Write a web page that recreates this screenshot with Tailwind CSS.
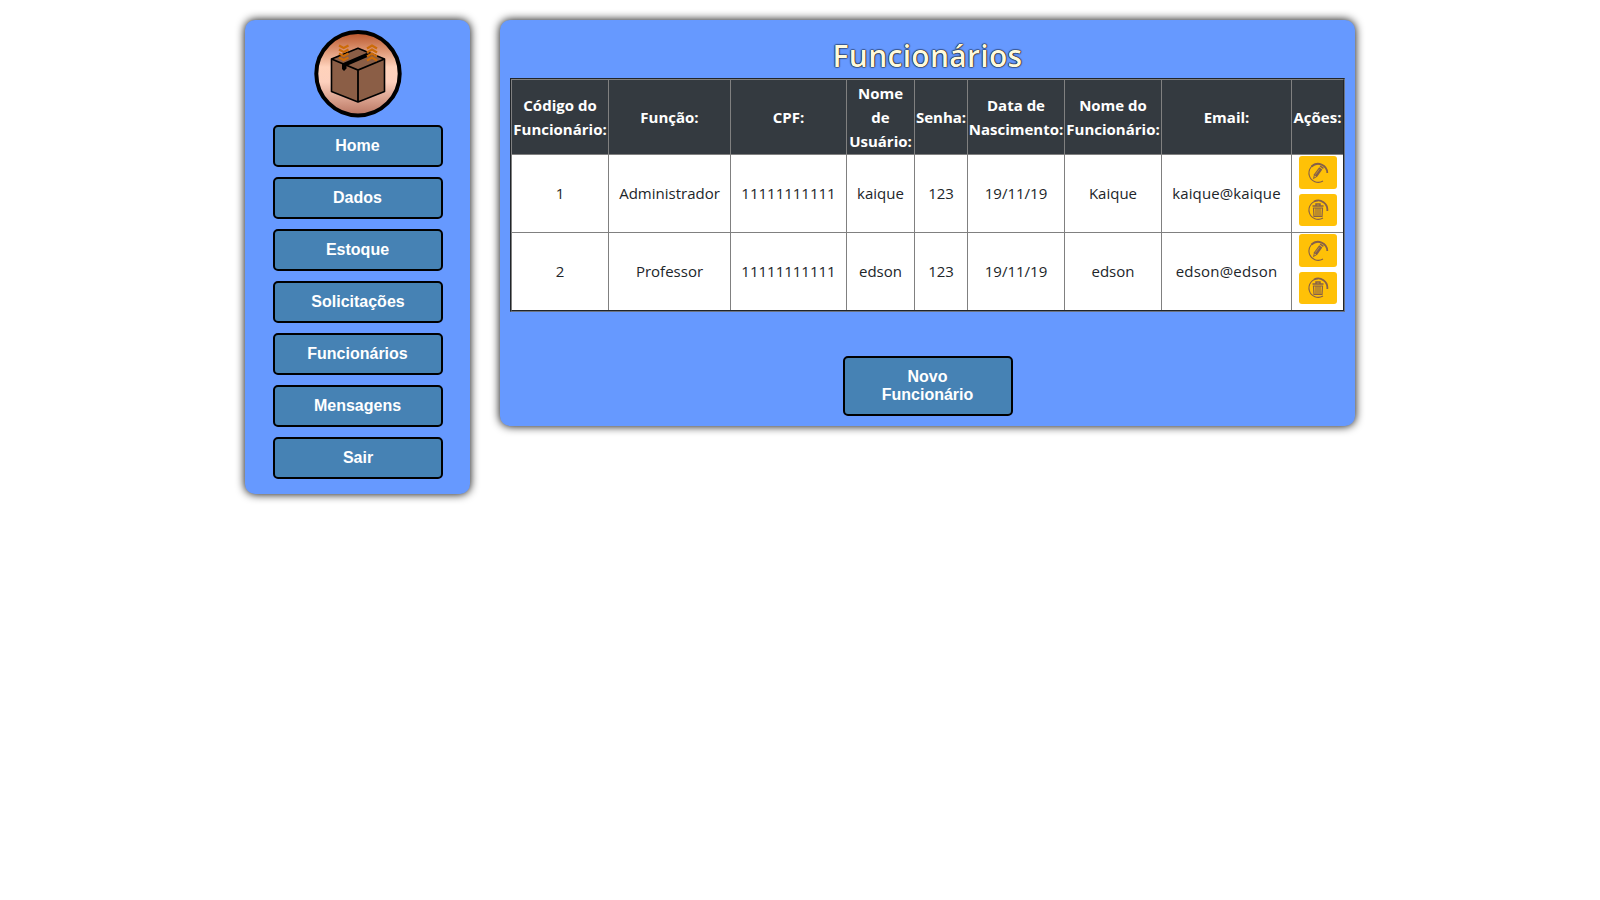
<!DOCTYPE html>
<html lang="pt-BR">
<head>
<meta charset="utf-8">
<title>Funcionários</title>
<script src="https://cdn.jsdelivr.net/npm/@tailwindcss/browser@4"></script>
</head>
<body class="bg-white text-[#212529] font-['Open_Sans',sans-serif]">
<svg class="hidden">
  <symbol id="pencil" viewBox="0 0 22 22">
    <path d="M11 1.7A9.3 9.3 0 1 0 16 19" fill="none" stroke="#85604a" stroke-width="1.1"/>
    <path d="M4.500 4.500A9.3 9.3 0 0 1 20.3 11" fill="none" stroke="#85604a" stroke-width="1.8"/>
    <path d="M6 17.300L7 12.3L12.2 5.3L15.3 7.5L10.2 14.7Z" fill="#85604a"/>
    <path d="M12.6 4.6L13.5 3.4L16.9 5.7L16 7Z" fill="#85604a"/>
    <path d="M8.400 12.600L12.4 7.200" stroke="#ffc107" stroke-width=".5"/>
    <path d="M7.3 15.4L7.7 13.600L9.200 14.6Z" fill="#ffc107"/>
  </symbol>
  <symbol id="trash" viewBox="0 0 22 22">
    <path d="M11 1.7A9.3 9.3 0 1 0 16 19" fill="none" stroke="#85604a" stroke-width="1.1"/>
    <path d="M7 2.500A9.3 9.3 0 0 1 20.3 12" fill="none" stroke="#85604a" stroke-width="1.8"/>
    <path d="M5.500 7.100H16.500M9 6.7V5H13V6.7" fill="none" stroke="#85604a" stroke-width="1.5"/>
    <path d="M6.500 9H15.500L15 17.500H7Z" fill="none" stroke="#85604a" stroke-width="1.2"/>
    <path d="M9 9V17M11 9V17M13 9V17" stroke="#85604a" stroke-width="1.100"/>
  </symbol>
</svg>
<main class="flex min-h-screen items-start pt-5 pl-[245px]">
  <nav class="flex w-[225px] h-[474px] flex-col items-center gap-[10px] rounded-[10px] bg-[#6699ff] pt-[10px] shadow-[0_0_10px_black]">
    <svg class="-mb-[3px] ml-[1px] h-[88px] w-[88px] shrink-0" viewBox="0 0 88 88">
      <defs><linearGradient id="g" x1="0" y1="0" x2="0" y2="1">
        <stop offset="0" stop-color="#b9532a"/><stop offset=".12" stop-color="#cc7750"/><stop offset=".42" stop-color="#ffd2bb"/><stop offset=".6" stop-color="#fdd0bd"/><stop offset="1" stop-color="#b87460"/>
      </linearGradient></defs>
      <circle cx="44" cy="43.700" r="41.700" fill="url(#g)" stroke="#000" stroke-width="4"/>
      <path d="M17.5 29L44 18.300L70.500 29V61.500L44 72L17.500 61.500Z" fill="#8b5e46" stroke="#000" stroke-width="1.6" stroke-linejoin="round"/>
      <path d="M17.500 29L44 40L70.500 29M44 40V72" fill="none" stroke="#000" stroke-width="1.800"/>
      <path d="M28 33.500L52.500 23L57 25.500L32.500 36V38.500L30 41L28 39Z" fill="#000"/>
      <g fill="none" stroke="#cc6b08" stroke-width="2.200">
        <path d="M25 15.500L29.700 18L34.500 15.500M25 19.500L29.700 22L34.500 19.500M25 23.500L29.700 26L34.500 23.500M25 27.500L29.700 30L34.500 27.500"/>
        <path d="M53 18.500L58 15.500L63 18.500M53 22.500L58 19.500L63 22.500M53 26.500L58 23.500L63 26.500M53 30.500L58 27.500L63 30.500"/>
      </g>
    </svg>
    <a class="flex h-[42px] w-[170px] shrink-0 items-center justify-center rounded-[5px] border-2 border-black bg-[#4682b4] font-['Liberation_Sans',sans-serif] text-base font-bold text-white">Home</a>
    <a class="flex h-[42px] w-[170px] shrink-0 items-center justify-center rounded-[5px] border-2 border-black bg-[#4682b4] font-['Liberation_Sans',sans-serif] text-base font-bold text-white">Dados</a>
    <a class="flex h-[42px] w-[170px] shrink-0 items-center justify-center rounded-[5px] border-2 border-black bg-[#4682b4] font-['Liberation_Sans',sans-serif] text-base font-bold text-white">Estoque</a>
    <a class="flex h-[42px] w-[170px] shrink-0 items-center justify-center rounded-[5px] border-2 border-black bg-[#4682b4] pl-px font-['Liberation_Sans',sans-serif] text-base font-bold text-white">Solicitações</a>
    <a class="flex h-[42px] w-[170px] shrink-0 items-center justify-center rounded-[5px] border-2 border-black bg-[#4682b4] font-['Liberation_Sans',sans-serif] text-base font-bold text-white">Funcionários</a>
    <a class="flex h-[42px] w-[170px] shrink-0 items-center justify-center rounded-[5px] border-2 border-black bg-[#4682b4] font-['Liberation_Sans',sans-serif] text-base font-bold text-white">Mensagens</a>
    <a class="flex h-[42px] w-[170px] shrink-0 items-center justify-center rounded-[5px] border-2 border-black bg-[#4682b4] pl-px font-['Liberation_Sans',sans-serif] text-base font-bold text-white">Sair</a>
  </nav>
  <section class="ml-[30px] flex h-[406px] w-[855px] flex-col items-center rounded-[10px] bg-[#6699ff] pt-[17px] shadow-[0_0_10px_black]">
    <h1 class="h-[41px] text-[30px] leading-[38px] font-semibold tracking-[0.3px] text-[#fffadc] [text-shadow:0_0_1px_black,0_0_2px_black,0_0_1px_black]">Funcionários</h1>
    <div class="w-[835px] border border-t-[#212529] border-r-gray-500 border-b-gray-500 border-l-[#212529]">
      <div class="grid grid-cols-[96px_121px_115px_67px_52px_96px_96px_129px_51px] grid-rows-[74px_77px_77px] gap-px border border-t-[#808080] border-r-[#212529] border-b-[#212529] border-l-[#808080] bg-[#808080] text-center text-[15px] leading-6 *:flex *:items-center *:justify-center *:bg-white">
        <div class="bg-[#343a40]! font-bold text-white">Código do<br>Funcionário:</div>
        <div class="bg-[#343a40]! font-bold text-white">Função:</div>
        <div class="bg-[#343a40]! font-bold text-white">CPF:</div>
        <div class="bg-[#343a40]! font-bold text-white">Nome<br>de<br>Usuário:</div>
        <div class="bg-[#343a40]! font-bold text-white">Senha:</div>
        <div class="bg-[#343a40]! font-bold text-white">Data de<br>Nascimento:</div>
        <div class="bg-[#343a40]! font-bold text-white">Nome do<br>Funcionário:</div>
        <div class="bg-[#343a40]! font-bold text-white">Email:</div>
        <div class="bg-[#343a40]! font-bold text-white">Ações:</div>
        <div class="pb-0.5">1</div><div class="pb-0.5">Administrador</div><div class="pb-0.5">11111111111</div><div class="pb-0.5">kaique</div><div class="pb-0.5">123</div><div class="pb-0.5">19/11/19</div><div class="pb-0.5">Kaique</div><div class="pb-0.5 tracking-[0.1px]">kaique@kaique</div>
        <div class="flex-col gap-[5px] px-px pb-[5px]">
          <a class="flex h-[33px] w-[38px] items-center justify-center rounded-[3px] bg-[#ffc107]"><svg class="h-[22px] w-[22px]"><use href="#pencil"/></svg></a>
          <a class="flex h-8 w-[38px] items-center justify-center rounded-[3px] bg-[#ffc107]"><svg class="h-[22px] w-[22px]"><use href="#trash"/></svg></a>
        </div>
        <div class="pb-0.5">2</div><div class="pb-0.5">Professor</div><div class="pb-0.5">11111111111</div><div class="pb-0.5">edson</div><div class="pb-0.5">123</div><div class="pb-0.5">19/11/19</div><div class="pb-0.5">edson</div><div class="pb-0.5 tracking-[0.2px]">edson@edson</div>
        <div class="flex-col gap-[5px] px-px pb-[5px]">
          <a class="flex h-[33px] w-[38px] items-center justify-center rounded-[3px] bg-[#ffc107]"><svg class="h-[22px] w-[22px]"><use href="#pencil"/></svg></a>
          <a class="flex h-8 w-[38px] items-center justify-center rounded-[3px] bg-[#ffc107]"><svg class="h-[22px] w-[22px]"><use href="#trash"/></svg></a>
        </div>
      </div>
    </div>
    <a class="mt-11 flex h-[60px] w-[170px] items-center justify-center rounded-[5px] border-2 border-black bg-[#4682b4] text-center font-['Liberation_Sans',sans-serif] text-base leading-[18px] font-bold text-white">Novo<br>Funcionário</a>
  </section>
</main>
</body>
</html>
